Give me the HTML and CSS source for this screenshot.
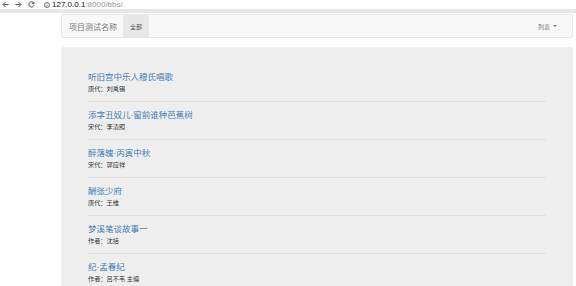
FILE: index.html
```html
<!DOCTYPE html>
<html>
<head>
  <meta charset="utf-8">
  <title>bbs</title>
  <link rel="stylesheet" href="styles.css">
</head>
<body>

  <!-- browser address bar -->
  <div class="chrome">
    <svg class="ico" width="7" height="7" viewBox="0 0 7 7"><path d="M6.5 3.5H1M3.5 1L1 3.5 3.5 6" fill="none" stroke="#555" stroke-width="1"/></svg>
    <svg class="ico" width="7" height="7" viewBox="0 0 7 7"><path d="M0.5 3.5H6M3.5 1L6 3.5 3.5 6" fill="none" stroke="#555" stroke-width="1"/></svg>
    <svg class="ico" width="7" height="7" viewBox="0 0 7 7"><path d="M5.8 2.2A2.6 2.6 0 1 0 6 4.2M6 0.8V2.5H4.3" fill="none" stroke="#555" stroke-width="1"/></svg>
    <span class="url"><svg width="6" height="6" viewBox="0 0 6 6"><circle cx="3" cy="3" r="2.5" fill="none" stroke="#555" stroke-width="0.8"/><path d="M3 2.6V4.6M3 1.3V1.9" stroke="#555" stroke-width="0.8"/></svg>
      <b>127.0.0.1</b>:8000/bbs/</span>
  </div>

  <div class="container">
    <nav class="navbar">
      <a class="brand" href="#">项目测试名称</a>
      <a class="tab active" href="#">全部</a>
      <a class="tab dropdown" href="#">列表 <span class="caret"></span></a>
    </nav>

    <div class="well">
      <div class="item">
        <a class="title" href="#">听旧宫中乐人穆氏唱歌</a>
        <p class="author">唐代：刘禹锡</p>
      </div>
      <div class="item">
        <a class="title" href="#">添字丑奴儿·窗前谁种芭蕉树</a>
        <p class="author">宋代：李清照</p>
      </div>
      <div class="item">
        <a class="title" href="#">醉落魄·丙寅中秋</a>
        <p class="author">宋代：郭应祥</p>
      </div>
      <div class="item">
        <a class="title" href="#">酬张少府</a>
        <p class="author">唐代：王维</p>
      </div>
      <div class="item">
        <a class="title" href="#">梦溪笔谈故事一</a>
        <p class="author">作者：沈括</p>
      </div>
      <div class="item">
        <a class="title" href="#">纪·孟春纪</a>
        <p class="author">作者：吕不韦 主编</p>
      </div>
    </div>
  </div>

</body>
</html>
```

FILE: styles.css
```css
* {
  box-sizing: border-box;
}

body {
  margin: 0;
  background-color: #ffffff;
  font-family: "Liberation Sans", "Noto Sans CJK SC", sans-serif;
  color: #333333;
  overflow: hidden;
}

a {
  text-decoration: none;
}

/* Fake browser toolbar */

.chrome {
  height: 13px;
  display: flex;
  align-items: center;
  padding: 0 0 0 2px;
  border-bottom: 4px solid #e6e6e6;
  background-color: #ffffff;
}

.ico {
  margin-right: 6px;
}

.url {
  display: flex;
  align-items: center;
  margin-left: 3px;
  font-size: 8px;
  line-height: 9px;
  color: #999999;
}

.url svg {
  margin-right: 2px;
}

.url b {
  font-weight: normal;
  color: #222222;
}

.container {
  width: 512px;
  margin-left: 61px;
}

/* Navbar */

.navbar {
  margin-top: 1px;
  height: 24px;
  display: flex;
  align-items: stretch;
  background-color: #f8f8f8;
  border: 1px solid #e7e7e7;
  border-radius: 2px;
}

.brand {
  display: flex;
  align-items: center;
  padding: 0 6px 0 7px;
  font-size: 8px;
  color: #777777;
}

.tab {
  display: flex;
  align-items: center;
  padding: 0 7px;
  font-size: 6px;
  color: #777777;
}

.tab.active {
  background-color: #e7e7e7;
  color: #555555;
}

.dropdown {
  margin-left: auto;
  padding-right: 15px;
}

.caret {
  display: inline-block;
  width: 0;
  height: 0;
  margin-left: 3px;
  border-top: 2px solid #777777;
  border-left: 2px solid transparent;
  border-right: 2px solid transparent;
}

/* List of poems */

.well {
  margin-top: 9px;
  height: 239px;
  overflow: hidden;
  padding: 25px 27px 0 27px;
  background-color: #eeeeee;
  border-radius: 3px 3px 0 0;
}

.item {
  padding-bottom: 8px;
  margin-bottom: 8px;
  border-bottom: 1px solid #e0e0e0;
}

.title {
  display: block;
  height: 11px;
  line-height: 11px;
  font-size: 8.5px;
  color: #3d7fbd;
}

.author {
  margin: 1px 0 0 0;
  height: 9px;
  line-height: 9px;
  font-size: 6.2px;
  color: #333333;
}
```
